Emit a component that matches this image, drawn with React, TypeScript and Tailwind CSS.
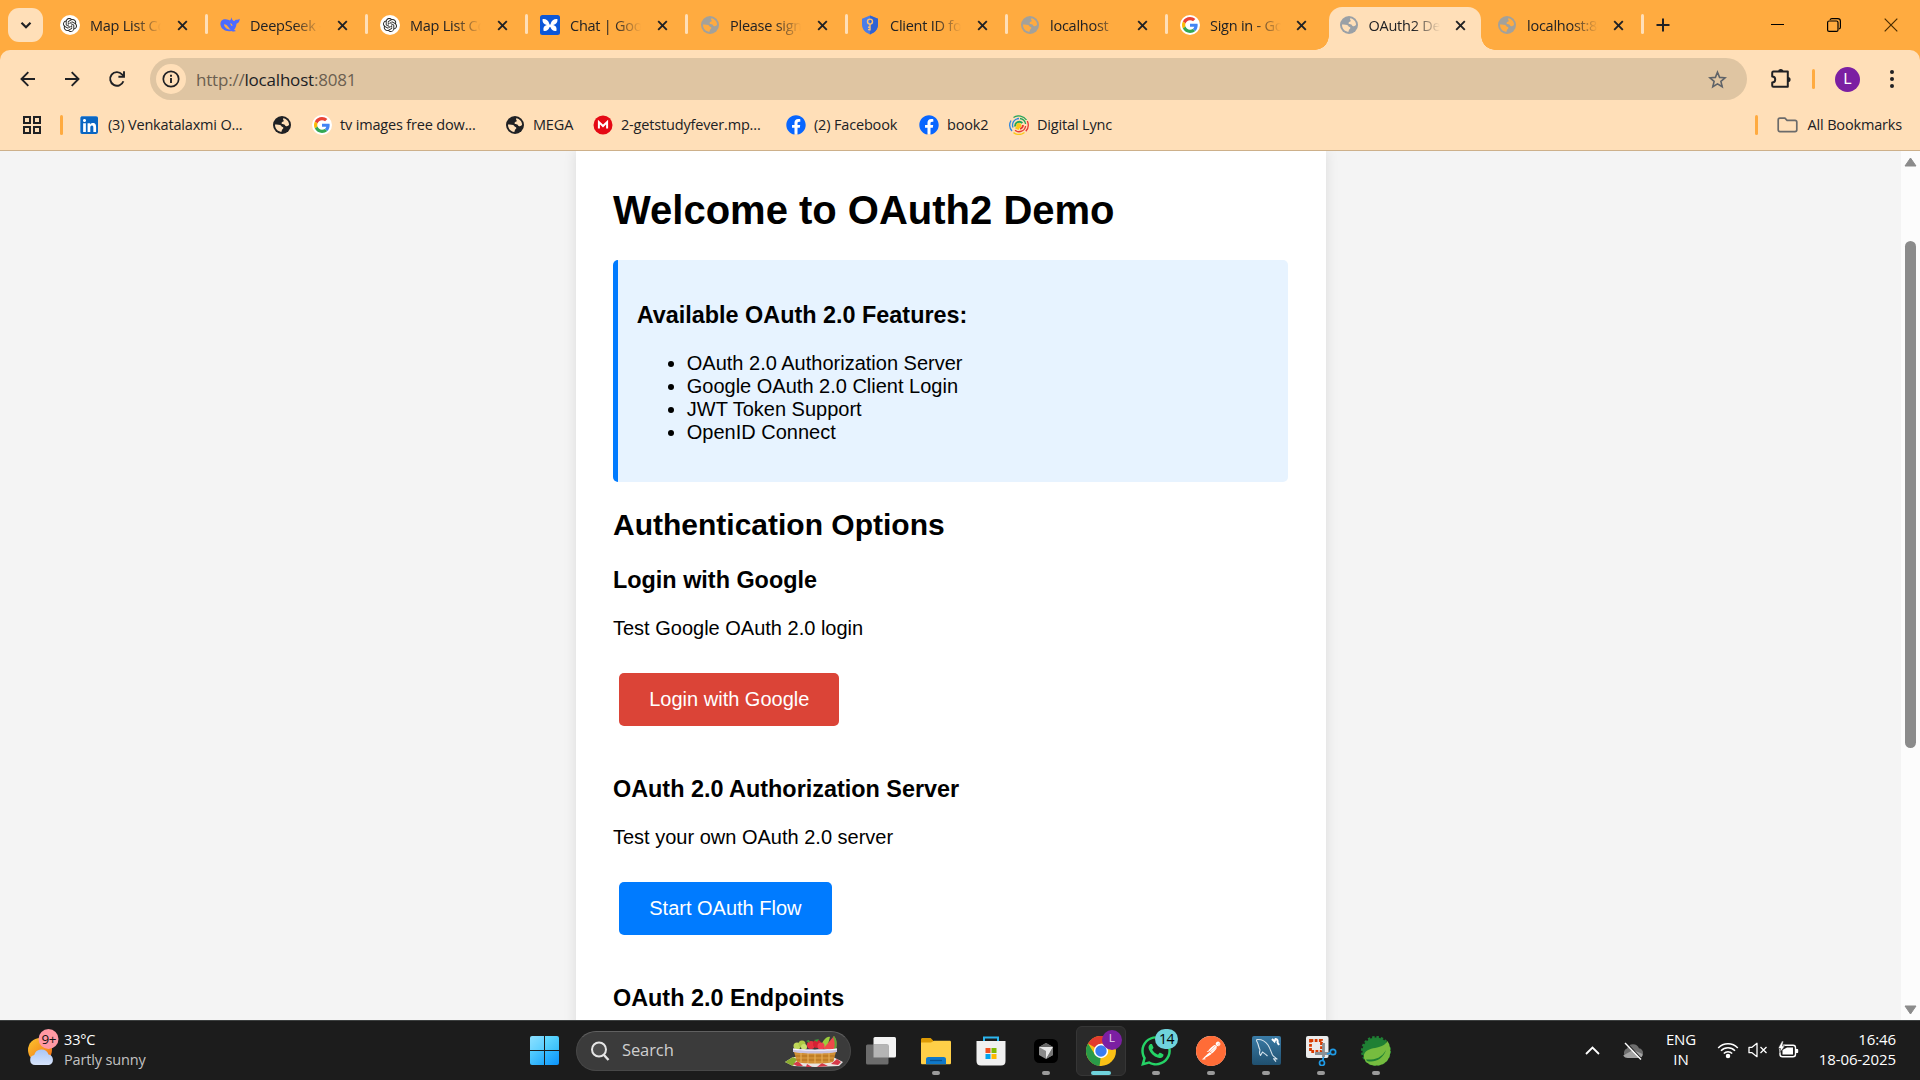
import React from "react";
import { SiOpenai, SiPostman } from "react-icons/si";
import { FaFacebook, FaLinkedin, FaWhatsapp } from "react-icons/fa";

type P = { children?: React.ReactNode; className?: string };

/* ---------- site icons ---------- */

function GoogleG({ size = 16 }: { size?: number }) {
  return (
    <span className="flex size-5 shrink-0 items-center justify-center rounded-full bg-white">
      <svg width={size} height={size} viewBox="0 0 48 48">
        <path fill="#EA4335" d="M24 9.5c3.54 0 6.71 1.22 9.21 3.6l6.85-6.85C35.9 2.38 30.47 0 24 0 14.62 0 6.51 5.38 2.56 13.22l7.98 6.19C12.43 13.72 17.74 9.5 24 9.5z" />
        <path fill="#4285F4" d="M46.98 24.55c0-1.57-.15-3.09-.38-4.55H24v9.02h12.94c-.58 2.96-2.26 5.48-4.78 7.18l7.73 6c4.51-4.18 7.09-10.36 7.09-17.65z" />
        <path fill="#FBBC05" d="M10.53 28.59c-.48-1.45-.76-2.99-.76-4.59s.27-3.14.76-4.59l-7.98-6.19C.92 16.46 0 20.12 0 24c0 3.88.92 7.54 2.56 10.78l7.97-6.19z" />
        <path fill="#34A853" d="M24 48c6.48 0 11.93-2.13 15.89-5.81l-7.73-6c-2.15 1.45-4.92 2.3-8.16 2.3-6.26 0-11.57-4.22-13.47-9.91l-7.98 6.19C6.51 42.62 14.62 48 24 48z" />
      </svg>
    </span>
  );
}

function Globe({ color, land }: { color: string; land: string }) {
  return (
    <svg className="size-5 shrink-0" viewBox="0 0 20 20">
      <circle cx="10" cy="10" r="9" fill={color} />
      <path fill={land} d="M11.3 3.2c3.3.5 5.600 3.200 5.800 6.300-.7 1.600-2 2-3.400 1.500-.7-.3-.7-1.300-1.500-1.600-1-.4-2.300 0-2.600-.9-.3-1 .8-1.600 1.700-1.900.9-.4.3-1.200-.1-1.800-.3-.6-.3-1.200.1-1.600z" />
      <path fill={land} d="M3 9.600c1.500-.2 3.700-.1 5.100.5 1.300.6 1.200 1.700 2.500 2 .9.300 1 1.300.2 1.900-1.100.7-.8 1.900-1.500 2.900C5.600 16.600 2.900 13.500 3 9.600z" />
    </svg>
  );
}
const GreyGlobe = () => <Globe color="#a3a19b" land="#ffab40" />;
const BlackGlobe = () => <Globe color="#202124" land="#ffdfb8" />;

const OpenAi = () => (
  <span className="flex size-5 shrink-0 items-center justify-center rounded-full bg-white">
    <SiOpenai className="size-[14px] text-[#222]" />
  </span>
);

const Whale = () => (
  <svg className="size-5 shrink-0" viewBox="0 0 20 20">
    <path fill="#4d6bfe" d="M11.500 2.300c.2 1.900 1 3.300 2.700 4 .4-1 1.400-1.600 2.600-1.500 1.100.1 1.800-.3 2.900-1-.1 2.500-1 4.300-3.200 4.900-.2 2.500-1 4.400-2.400 6 .6.700 1.300 1 2 1.400-2 .6-3.500.3-4.700-.2C6.800 17.200.8 14.600.4 9.300.3 6 2.600 4 5.800 4.300c1.600.1 3 .5 4 1.300.9-.7 1.300-1.800 1.700-3.300z" />
    <path fill="#ffab40" d="M4 9.300c1.800-.1 3.300 1.100 4.400 2.800.7 1.100 1.300 1.900 2.400 2.500-3 .2-6.600-1.900-6.800-5.300zM10 8.300c1.500.1 2.500 1.200 2.500 2.800-1.100-.2-1.700-.8-1.900-1.800z" />
  </svg>
);

const Butterfly = () => (
  <svg className="size-5 shrink-0" viewBox="0 0 20 20">
    <rect width="20" height="20" rx="2.500" fill="#0b57d9" />
    <path fill="#fff" d="M2.500 4.200c2.800-.7 6 1 6.900 4.900.1.700 1.100.7 1.200 0C11.500 5.200 14.700 3.500 17.500 4.200c.3 3-1.200 5.200-4.300 5.900 2.600.6 3.800 2.500 3.300 5.600-2.600.7-4.900-.4-5.900-3.200-.2-.6-1-.6-1.200 0-1 2.800-3.300 3.900-5.900 3.200-.5-3.100.7-5 3.300-5.600-3.100-.7-4.600-2.900-4.300-5.900z" />
  </svg>
);

const Shield = () => (
  <svg className="size-5 shrink-0" viewBox="0 0 20 20">
    <path fill="#4a7de8" d="M10 .6l8 3.200v6c0 4.300-3 7.800-8 9.600-5-1.800-8-5.300-8-9.600v-6z" />
    <path fill="#2f62d3" d="M10 .6l8 3.200v6c0 4.300-3 7.800-8 9.600z" />
    <circle cx="10" cy="6.600" r="2.500" fill="none" stroke="#ffc06b" strokeWidth="1.400" />
    <path d="M10 9v6.500M10 12.200H8M10 14.600H8" stroke="#ffc06b" strokeWidth="1.400" fill="none" />
  </svg>
);

const Mega = () => (
  <svg className="size-5 shrink-0" viewBox="0 0 20 20">
    <circle cx="10" cy="10" r="9.500" fill="#e50914" />
    <path d="M5.900 13.600V7l4.100 4 4.100-4v6.600" fill="none" stroke="#fff" strokeWidth="2" />
  </svg>
);

const Lync = () => (
  <svg className="size-5 shrink-0" viewBox="0 0 20 20" fill="none" strokeWidth="1.300">
    <path stroke="#22a45a" d="M4.500 2.500a9.300 9.300 0 0 1 13 2.500" />
    <path stroke="#e53935" d="M18.300 6a9.300 9.300 0 0 1-1.500 10.200" />
    <path stroke="#f9c81c" d="M15.500 17.400a9.300 9.300 0 0 1-11 .2" />
    <path stroke="#2e86de" d="M3 16A9.300 9.300 0 0 1 2 5.500" />
    <path stroke="#2e86de" d="M4 12.500a6.600 6.600 0 0 1 6-9" />
    <path stroke="#22a45a" d="M11 3.500a6.600 6.600 0 0 1 5.600 5.500" />
    <path stroke="#e53935" d="M16.600 11A6.600 6.600 0 0 1 6 15.300" />
    <path stroke="#22a45a" strokeWidth="2" d="M6.300 11.500a4 4 0 0 1 7-3.300" />
    <path stroke="#e53935" strokeWidth="1.800" d="M14 10a4 4 0 0 1-3 3.800" />
    <circle cx="9.800" cy="10.500" r="2.600" fill="#f9c81c" />
    <path stroke="#f9c81c" strokeWidth="2" d="M6.500 12.500l3.500 1.500" />
  </svg>
);

const FacebookIcon = () => (
  <span className="flex size-5 shrink-0 items-center justify-center rounded-full bg-[radial-gradient(circle,#fff_60%,transparent_62%)]">
    <FaFacebook className="size-5 text-[#0866ff]" />
  </span>
);

/* ---------- tab strip ---------- */

const CloseX = ({ className = "" }: P) => (
  <svg className={"size-[11px] shrink-0 " + className} viewBox="0 0 11 11">
    <path d="M1.200 1.200l8.600 8.600M9.800 1.200L1.200 9.800" stroke="#202124" strokeWidth="1.900" />
  </svg>
);

type TabProps = { icon: React.ReactNode; label: string; width: string; close?: string; active?: boolean; sep?: boolean };

function Tab({ icon, label, width, close = "ml-[16px]", active, sep }: TabProps) {
  return (
    <div className={"relative flex h-[50px] shrink-0 items-center pl-[14px] " + width}>
      {active && (
        <>
          <div className="absolute top-[7px] left-[4.500px] h-[43px] w-[152px] rounded-t-[13px] bg-[#ffdfb8]" />
          <div className="absolute bottom-0 left-[-9.500px] size-[14px] bg-[radial-gradient(circle_at_0_0,transparent_13.500px,#ffdfb8_14px)]" />
          <div className="absolute bottom-0 left-[156.500px] size-[14px] bg-[radial-gradient(circle_at_100%_0,transparent_13.500px,#ffdfb8_14px)]" />
        </>
      )}
      <span className="relative flex">{icon}</span>
      <span className="relative mt-px ml-[10px] w-[71px] shrink-0 overflow-hidden text-[14.500px] tracking-[-0.250px] whitespace-nowrap [mask-image:linear-gradient(to_right,#000_62%,transparent_100%)]">
        {label}
      </span>
      <CloseX className={"relative " + close} />
      {sep && <div className="absolute top-[14px] right-[-2px] h-5 w-[3px] rounded-sm bg-[#ffdfb8]" />}
    </div>
  );
}

function TabStrip() {
  return (
    <div className="flex h-[50px] items-center bg-[#ffab40] text-[#202124]">
      <div className="ml-2 flex h-[34px] w-[35px] items-center justify-center rounded-[11px] bg-[#ffdfb8]">
        <svg className="size-[12px]" viewBox="0 0 12 12">
          <path d="M1.500 3.800L6 8.200l4.500-4.400" fill="none" stroke="#202124" strokeWidth="2.200" />
        </svg>
      </div>
      <div className="ml-[3px] flex">
        <Tab width="w-[160px]" sep icon={<OpenAi />} label="Map List Conversion" />
        <Tab width="w-[160px]" sep icon={<Whale />} label="DeepSeek - Into" />
        <Tab width="w-[160px]" sep icon={<OpenAi />} label="Map List Conversion" />
        <Tab width="w-[160px]" sep icon={<Butterfly />} label="Chat | Google" />
        <Tab width="w-[160px]" sep icon={<GreyGlobe />} label="Please sign in" />
        <Tab width="w-[160px]" sep icon={<Shield />} label="Client ID for Web" />
        <Tab width="w-[160px]" sep icon={<GreyGlobe />} label="localhost" />
        <Tab width="w-[158.500px]" close="ml-[14.500px]" icon={<GoogleG />} label="Sign in - Google" />
        <Tab width="w-[158.500px]" close="ml-[15px]" active icon={<Globe color="#9aa0a6" land="#ffdfb8" />} label="OAuth2 Demo" />
        <Tab width="w-[159px]" close="ml-[15px]" sep icon={<GreyGlobe />} label="localhost:8081" />
      </div>
      <svg className="ml-[14px] size-[14px]" viewBox="0 0 14 14">
        <path d="M7 .5v13M.5 7h13" stroke="#202124" strokeWidth="2" />
      </svg>
      <div className="mr-[22px] ml-auto flex items-center gap-[43px] text-black">
        <div className="mb-[2px] h-px w-[13px] bg-black" />
        <svg className="size-[14px]" viewBox="0 0 14 14" fill="none" stroke="currentColor" strokeWidth="1.200">
          <rect x=".6" y="3" width="10.400" height="10.400" rx="1.500" />
          <path d="M3 1.900c.3-.8 1-1.300 1.800-1.300h6c1.500 0 2.600 1.100 2.600 2.600v6c0 .9-.5 1.500-1.300 1.800" />
        </svg>
        <svg className="size-[14px]" viewBox="0 0 14 14">
          <path d="M.7.7l12.600 12.600M13.300.7L.7 13.300" stroke="#4a2d00" strokeWidth="1.200" />
        </svg>
      </div>
    </div>
  );
}

/* ---------- toolbar ---------- */

function Toolbar() {
  return (
    <div className="flex h-[58px] items-center text-[#202124]">
      <svg className="ml-5 size-4" viewBox="0 0 16 16" fill="none" stroke="currentColor" strokeWidth="1.900">
        <path d="M15 8H1.800M8.300 1.200L1.500 8l6.800 6.800" />
      </svg>
      <svg className="ml-[28px] size-4" viewBox="0 0 16 16" fill="none" stroke="currentColor" strokeWidth="1.900">
        <path d="M1 8h13.200M7.700 1.200L14.500 8l-6.800 6.800" />
      </svg>
      <svg className="ml-[28px] size-[18px]" viewBox="0 0 18 18" fill="none" stroke="currentColor" strokeWidth="1.900">
        <path d="M15.400 11.200A6.800 6.800 0 1 1 14 4.300l2 2" />
        <path d="M16 1.200v5.600h-5.600" />
      </svg>
      <div className="ml-[24px] flex h-[42px] w-[1597px] items-center rounded-full bg-[#dfc5a2] pr-[20px] pl-[6px]">
        <div className="flex size-[30px] items-center justify-center rounded-full bg-[#ffdfb8]">
          <svg className="size-[18px]" viewBox="0 0 18 18">
            <circle cx="9" cy="9" r="7.700" fill="none" stroke="currentColor" strokeWidth="1.700" />
            <path d="M9 8v5M9 4.800v1.900" stroke="currentColor" strokeWidth="1.900" />
          </svg>
        </div>
        <div className="mt-px ml-[10px] text-[17px] tracking-[-0.200px] text-[#6b5f50]">
          http://<span className="text-[#202124]">localhost</span>:8081
        </div>
        <svg className="ml-auto size-[19px]" viewBox="0 0 19 19" fill="none" stroke="#5f6368" strokeWidth="1.600">
          <path d="M9.500 2.200l2.100 5.200 5.500.4-4.200 3.600 1.300 5.400-4.700-2.900-4.700 2.900 1.300-5.400L1.900 7.800l5.500-.4z" />
        </svg>
      </div>
      <svg className="ml-[23px] size-[22px]" viewBox="0 0 22 22">
        <path d="M3.400 3.600h14.400v15.200H3.400c-.8 0-1.200-.4-1.200-1.200v-3c2 0 3-1.300 3-3.100s-1-3.100-3-3.100v-3c0-1.200.4-1.800 1.200-1.800z" fill="none" stroke="currentColor" strokeWidth="2" strokeLinejoin="round" />
        <path d="M8.200 3.500a2.600 2.600 0 0 1 5.200 0zM18 8.900a2.600 2.600 0 0 1 0 5.200z" fill="currentColor" />
      </svg>
      <div className="ml-[20px] h-5 w-[3px] rounded-sm bg-[#ffab40]" />
      <div className="ml-[20px] flex size-[25px] items-center justify-center rounded-full bg-[#7b1fa2] font-['Roboto',sans-serif] text-[15px] text-white">L</div>
      <div className="ml-[30px] flex flex-col gap-[3px]">
        <div className="size-1 rounded-full bg-current" />
        <div className="size-1 rounded-full bg-current" />
        <div className="size-1 rounded-full bg-current" />
      </div>
    </div>
  );
}

/* ---------- bookmarks ---------- */

function Bookmark({ icon, label, width }: { icon: React.ReactNode; label?: string; width: string }) {
  return (
    <div className={"flex shrink-0 items-center gap-2 whitespace-nowrap " + width}>
      {icon}
      {label && <span>{label}</span>}
    </div>
  );
}

function BookmarksBar() {
  return (
    <div className="flex h-[34px] items-center text-[14.500px] tracking-[-0.170px] text-[#202124]">
      <div className="ml-[23px] grid grid-cols-2 gap-[2px]">
        <div className="size-2 border-2 border-current" />
        <div className="size-2 border-2 border-current" />
        <div className="size-2 border-2 border-current" />
        <div className="size-2 border-2 border-current" />
      </div>
      <div className="mr-[17px] ml-[19px] h-5 w-[3px] rounded-sm bg-[#ffab40]" />
      <Bookmark
        width="w-[192px]"
        label="(3) Venkatalaxmi O..."
        icon={
          <span className="mr-[2px] flex size-[18px] shrink-0 items-center justify-center overflow-hidden rounded-[2px] bg-white">
            <FaLinkedin className="size-[21px] shrink-0 text-[#0a66c2]" />
          </span>
        }
      />
      <Bookmark width="w-[40px]" icon={<BlackGlobe />} />
      <Bookmark width="w-[193px]" icon={<GoogleG />} label="tv images free dow..." />
      <Bookmark width="w-[88px]" icon={<BlackGlobe />} label="MEGA" />
      <Bookmark width="w-[193px]" icon={<Mega />} label="2-getstudyfever.mp..." />
      <Bookmark width="w-[133px]" icon={<FacebookIcon />} label="(2) Facebook" />
      <Bookmark width="w-[90px]" icon={<FacebookIcon />} label="book2" />
      <Bookmark width="w-[110px]" icon={<Lync />} label="Digital Lync" />
      <div className="mr-[19px] ml-auto h-5 w-[3px] rounded-sm bg-[#ffab40]" />
      <svg className="mr-[10px] h-[16px] w-[21px]" viewBox="0 0 21 16">
        <path d="M1.200 3c0-1.200.7-1.900 1.700-1.900h5l2.200 2.300h7.900c1.200 0 1.800.6 1.800 1.700v7.700c0 1.200-.6 1.900-1.800 1.900H2.900c-1 0-1.700-.7-1.700-1.900z" fill="none" stroke="#6b6b6b" strokeWidth="1.700" />
      </svg>
      <span className="mr-[18px]">All Bookmarks</span>
    </div>
  );
}

/* ---------- web page ---------- */

const H3 = ({ children, className = "" }: P) => (
  <h3 className={"text-[23.400px] leading-[27px] font-bold " + className}>{children}</h3>
);

const Action = ({ children, className = "" }: P) => (
  <button className={"mx-[6.250px] mt-[33.500px] block rounded-[5px] px-[30px] py-[15px] text-[20px] leading-[23px] text-white " + className}>
    {children}
  </button>
);

function DemoPage() {
  return (
    <div className="flex min-h-0 flex-1 bg-[#f4f4f4] font-['Liberation_Sans',Arial,sans-serif] text-[20px] leading-[23px] text-black">
      <div className="flex flex-1 justify-center overflow-hidden">
        <main className="h-[1100px] w-[750px] bg-white px-[37.500px] pt-[35.500px] shadow-[0_0_12.500px_rgba(0,0,0,0.1)]">
          <h1 className="text-[40px] leading-[46px] font-bold">Welcome to OAuth2 Demo</h1>
          <section className="mt-[27.500px] rounded-[5px] border-l-[5px] border-[#007bff] bg-[#e7f3ff] px-[18.750px] pt-[42.150px] pb-[38.750px]">
            <H3>Available OAuth 2.0 Features:</H3>
            <ul className="mt-[22.600px] list-disc pl-[50px]">
              <li>OAuth 2.0 Authorization Server</li>
              <li>Google OAuth 2.0 Client Login</li>
              <li>JWT Token Support</li>
              <li>OpenID Connect</li>
            </ul>
          </section>
          <h2 className="mt-[26px] text-[30px] leading-[34px] font-bold">Authentication Options</h2>
          <H3 className="mt-[24.900px]">Login with Google</H3>
          <p className="mt-[22.400px]">Test Google OAuth 2.0 login</p>
          <Action className="bg-[#db4437]">Login with Google</Action>
          <H3 className="mt-[50px]">OAuth 2.0 Authorization Server</H3>
          <p className="mt-[22.400px]">Test your own OAuth 2.0 server</p>
          <Action className="bg-[#007bff]">Start OAuth Flow</Action>
          <H3 className="mt-[50px]">OAuth 2.0 Endpoints</H3>
        </main>
      </div>
      <div className="flex w-[19px] flex-col items-center bg-[#fcfcfc] pt-[6px] pb-[5px]">
        <svg className="h-[10px] w-[13px]" viewBox="0 0 13 10">
          <path d="M6.500 1L12 9H1z" fill="#8b8b8b" stroke="#8b8b8b" strokeLinejoin="round" />
        </svg>
        <div className="mt-[74px] h-[507px] w-[11px] rounded-full bg-[#8b8b8b]" />
        <svg className="mt-auto h-[10px] w-[13px]" viewBox="0 0 13 10">
          <path d="M6.500 9L12 1H1z" fill="#8b8b8b" stroke="#8b8b8b" strokeLinejoin="round" />
        </svg>
      </div>
    </div>
  );
}

/* ---------- taskbar ---------- */

function TaskbarApp({ children, running, active }: P & { running?: boolean; active?: boolean }) {
  return (
    <div className="flex w-[55px] shrink-0 justify-center">
      <div className={"relative flex h-[50px] w-[50px] items-center justify-center rounded-[6px] " + (active ? "border border-[#363636] bg-[#2a2a2a]" : "")}>
        {children}
        {running && <div className="absolute bottom-[1px] h-1 w-2 rounded-full bg-[#9a9a9a]" />}
        {active && <div className="absolute bottom-0 h-1 w-5 rounded-full bg-[#6fd3dc]" />}
      </div>
    </div>
  );
}

const Basket = () => (
  <svg className="h-[32px] w-[58px]" viewBox="0 0 58 32">
    <path d="M0 26l8-5h40l10 5-4 4-24 1-22-1z" fill="#e8e4e2" />
    <path d="M0 26l8-5 4 2-4 7z" fill="#8aab2e" />
    <path d="M8 28l5-3 5 5h-6zM22 28l5 3h-6zM32 31l5-4 6 3zM46 28l6-5 4 3-3 3z" fill="#d6394a" />
    <path d="M36 12C37 4 42 0 45 1l-3 11z" fill="#9ccc3c" />
    <path d="M38 13L49 0c3 4 3 9 2 13z" fill="#ef4a4a" />
    <path d="M49 0c3.500 4 3 9 2 13h-2c1-4 1-8-1-12z" fill="#5da637" />
    <circle cx="12" cy="10" r="3.500" fill="#bfd75a" />
    <circle cx="17" cy="8" r="3.500" fill="#aecb45" />
    <circle cx="19" cy="11" r="3" fill="#cbe070" />
    <circle cx="26" cy="9" r="4" fill="#e5323f" />
    <circle cx="32" cy="8" r="4" fill="#d42133" />
    <circle cx="36" cy="10" r="3.500" fill="#f04050" />
    <path d="M21 5l4 2-1-3zM29 4l3 2 2-3z" fill="#3f9b3a" />
    <path d="M9 16h42l-3 10c-8 2-28 2-36 0z" fill="#d08f35" />
    <path d="M10 20h40M11 24h38" stroke="#b06f1d" strokeWidth="1.200" />
    <path d="M16 17v9M23 17v10M30 17v10M37 17v10M44 17v9" stroke="#e5ad55" strokeWidth="1.200" />
    <path d="M8 12.500c10 1.500 34 1.500 44 0v3.500c-10 2-34 2-44 0z" fill="#c9c3e0" />
    <path d="M8 12.500c10 1.500 34 1.500 44 0v1.200c-10 1.500-34 1.500-44 0z" fill="#f7f5ff" />
  </svg>
);

function Taskbar() {
  return (
    <div className="flex h-[60px] shrink-0 items-center border-t border-[#3c3f3f] bg-[#1c1c1c] text-white">
      <div className="flex w-[530px] items-center pb-[2px] pl-[27px]">
        <svg className="mb-[6px] h-[40px] w-[32px]" viewBox="0 0 32 40">
          <defs>
            <linearGradient id="sun" x1="0" y1="0" x2="1" y2="1">
              <stop offset="0" stopColor="#fcc62e" />
              <stop offset="1" stopColor="#f26a14" />
            </linearGradient>
            <linearGradient id="cloud" x1="0" y1="0" x2="0" y2="1">
              <stop offset="0" stopColor="#a9c6f7" />
              <stop offset="1" stopColor="#d7e4fb" />
            </linearGradient>
          </defs>
          <circle cx="13" cy="23" r="12" fill="url(#sun)" />
          <path d="M8 38a5 5 0 0 1-.8-9.900A7.500 7.500 0 0 1 21.500 27.500 5.400 5.400 0 0 1 22 38z" fill="url(#cloud)" />
          <circle cx="21.500" cy="12" r="10" fill="#ff99a4" />
          <text x="21.800" y="16.900" fontSize="13.500" textAnchor="middle" fill="#111" fontFamily="Open Sans" letterSpacing="-0.500">9+</text>
        </svg>
        <div className="ml-[5px] text-[14.500px] leading-[20px] tracking-[-0.160px]">
          <div>33°C</div>
          <div className="text-[#c2c2c2]">Partly sunny</div>
        </div>
      </div>
      <div className="grid h-[29px] w-[29px] grid-cols-2 gap-px">
        <div className="rounded-tl-[2px] bg-gradient-to-br from-[#8be0ff] to-[#55cdff]" />
        <div className="rounded-tr-[2px] bg-gradient-to-br from-[#66dcff] to-[#35bdf9]" />
        <div className="rounded-bl-[2px] bg-gradient-to-br from-[#56cfff] to-[#1ea8fa]" />
        <div className="rounded-br-[2px] bg-gradient-to-br from-[#35bdff] to-[#0a93fa]" />
      </div>
      <div className="ml-[17px] flex h-10 w-[275px] items-center rounded-full border border-[#484848] border-t-[#606060] bg-[#3b3b3b] pr-[7px] pl-[13px]">
        <svg className="size-5" viewBox="0 0 20 20" fill="none" stroke="#e6e6e6" strokeWidth="2">
          <circle cx="9" cy="8.500" r="7" fill="#4d4d4d" />
          <path d="M13.500 13.500l5 5.500" strokeWidth="2.400" />
        </svg>
        <span className="ml-[12px] text-[16.500px] tracking-[-0.100px] text-[#cfcfcf]">Search</span>
        <div className="mt-[3px] ml-auto">
          <Basket />
        </div>
      </div>
      <div className="ml-[2.500px] flex">
        <TaskbarApp>
          <svg className="h-[28px] w-[30px]" viewBox="0 0 30 28">
            <rect x="7.500" y="0" width="22.500" height="20.500" rx="1.500" fill="#f3f3f3" />
            <rect x="0" y="7.500" width="22.500" height="20" rx="1.500" fill="#6c6c6c" />
            <path d="M7.500 7.500h15v13h-15z" fill="#b5b5b5" />
          </svg>
        </TaskbarApp>
        <TaskbarApp running>
          <svg className="h-[28px] w-[30px]" viewBox="0 0 30 28">
            <path d="M0 2.500C0 1.500.7 1 1.600 1h8l3 3H28c1.200 0 2 .6 2 1.600V10H0z" fill="#dd9a05" />
            <path d="M0 5.500h10l3-1.800h15.500c1 0 1.500.6 1.500 1.500V26c0 .8-.6 1.300-1.400 1.300H1.400C.6 27.300 0 26.800 0 26z" fill="#ffcf48" />
            <path d="M5 27.300v-5c0-1.500 1-2.300 2.400-2.300h15.200c1.400 0 2.400.8 2.400 2.300v5z" fill="#0f78c9" />
            <path d="M9 23.500h12" stroke="#08508f" strokeWidth="1.300" />
          </svg>
        </TaskbarApp>
        <TaskbarApp>
          <svg className="h-[30px] w-[30px]" viewBox="0 0 30 30">
            <path d="M8 5V1.500h14V5" fill="none" stroke="#2cb5ee" strokeWidth="2" />
            <path d="M.5 5h29v20c0 3-1.500 4.500-4.500 4.500H5C2 29.500.5 28 .5 25z" fill="#f0f0f0" />
            <path fill="#f25022" d="M9.500 12h5v5h-5z" />
            <path fill="#7fba00" d="M15.500 12h5v5h-5z" />
            <path fill="#00a4ef" d="M9.500 18h5v5h-5z" />
            <path fill="#ffb900" d="M15.500 18h5v5h-5z" />
          </svg>
        </TaskbarApp>
        <TaskbarApp running>
          <svg className="size-[24px]" viewBox="0 0 24 24">
            <rect width="24" height="24" rx="5.500" fill="#000" />
            <path d="M12 4l7 4v8l-7 4-7-4V8z" fill="#8a8a8a" />
            <path d="M12 4l7 4H5z" fill="#666" />
            <path d="M5 8h14l-7 12v-8z" fill="#e6e6e6" />
            <path d="M19 8v8l-7 4z" fill="#777" />
          </svg>
        </TaskbarApp>
        <TaskbarApp active>
          <svg className="size-[30px]" viewBox="0 0 30 30">
            <circle cx="15" cy="15" r="15" fill="#fbc116" />
            <path d="M15 15L2 7.500A15 15 0 0 1 28 7.500H15z" fill="#e33b2e" />
            <path d="M2 7.500L8.900 18.500 15 22l-1 8A15 15 0 0 1 2 7.500z" fill="#2a9a48" />
            <path d="M21.100 18.500L15 30a15 15 0 0 1-1.500-.1L15 20z" fill="#fbc116" />
            <circle cx="15" cy="15" r="7.200" fill="#fff" />
            <circle cx="15" cy="15" r="5.700" fill="#3a7cf0" />
          </svg>
          <div className="absolute top-[3px] left-[25px] flex size-5 items-center justify-center rounded-full bg-[#7b1fa2] font-['Roboto',sans-serif] text-[11px] text-[#e6d2ee]">L</div>
        </TaskbarApp>
        <TaskbarApp running>
          <FaWhatsapp className="size-[34px] text-[#25d366]" />
          <div className="absolute top-[3px] left-[24px] flex h-[20px] w-[23px] items-center justify-center rounded-full bg-[#6fd3dc] text-[14px] tracking-[-0.500px] text-black">14</div>
        </TaskbarApp>
        <TaskbarApp running>
          <span className="flex size-[30px] items-center justify-center rounded-full bg-white">
            <SiPostman className="size-[30px] text-[#ff6c37]" />
          </span>
        </TaskbarApp>
        <TaskbarApp running>
          <svg className="size-[29px]" viewBox="0 0 29 29">
            <defs>
              <linearGradient id="sql" x1="0" y1="0" x2="0" y2="1">
                <stop offset="0" stopColor="#3a7ba6" />
                <stop offset="1" stopColor="#20506f" />
              </linearGradient>
            </defs>
            <rect width="29" height="29" rx="2" fill="url(#sql)" />
            <g fill="none" stroke="#d5e3ec" strokeWidth="1.100" strokeLinejoin="round">
              <path d="M5 3.500c4-.4 8.500 2 11 5.500 2 3 3 7 4.500 10 1 1.600 3 2.500 4.500 4l-3.500-.3 2.500 3M5 3.500c-1.500 1 .5 2.500 1 4.500s1 4 2 6c-.7 2-.5 4 .5 5.500l2-3.500c2 1.500 3.500 2.500 5 4" />
            </g>
            <path d="M20 3l2.500 2.500 1-2.500c2 .3 2.500 2 2 3.500L27 9" fill="none" stroke="#fff" strokeWidth="2" />
          </svg>
        </TaskbarApp>
        <TaskbarApp running>
          <svg className="h-[30px] w-[31px]" viewBox="0 0 31 30">
            <rect x="0" y="0" width="22.500" height="22" rx="2" fill="#ececec" />
            <rect x="4.500" y="4.500" width="11" height="11" fill="none" stroke="#d83b01" strokeWidth="2.800" strokeDasharray="2.800 1.400" />
            <path d="M17.500 7v14M9 17.500h15" stroke="#8b9196" strokeWidth="2.800" />
            <circle cx="27" cy="16" r="2.700" fill="none" stroke="#1f9ae5" strokeWidth="1.700" />
            <circle cx="16" cy="27" r="2.500" fill="none" stroke="#1f9ae5" strokeWidth="1.700" />
            <path d="M21 18l3.500-1M17.500 21l-.7 3.500" stroke="#1f9ae5" strokeWidth="1.800" />
          </svg>
        </TaskbarApp>
        <TaskbarApp running>
          <svg className="size-[30px]" viewBox="0 0 30 30">
            <circle cx="15" cy="15" r="13.500" fill="#1f8034" />
            <circle cx="15" cy="15" r="14" fill="none" stroke="#1f8034" strokeWidth="2" strokeDasharray="2.500 1.900" />
            <path d="M26.500 5c3.500 6 4 13 .5 18.500C22.500 30 14 31 8 28c-5-2.500-6.500-8-4-11.500 3-4 9-4 14-5.500 4-1.200 7-3 8.500-6z" fill="#76bc3f" />
            <path d="M5 23.500c8 .5 15.500-1 20-9.500-3 9.500-12 13-19 11z" fill="#1f8034" />
          </svg>
        </TaskbarApp>
      </div>
      <div className="mr-[24px] mb-[3px] ml-auto flex items-center text-[15px] leading-[20px]">
        <svg className="mt-[3px] h-[9px] w-[15px]" viewBox="0 0 15 9">
          <path d="M1 8l6.500-6.500L14 8" fill="none" stroke="#fff" strokeWidth="1.800" />
        </svg>
        <svg className="mt-[3px] ml-[22px] h-[18px] w-[22px]" viewBox="0 0 22 18">
          <path d="M6 16a5 5 0 0 1-1-9.500A6.500 6.500 0 0 1 17 6.200 5 5 0 0 1 17 16z" fill="#6e6e6e" />
          <path d="M6 16c-2 0-4-.8-4.800-2.500L11 8l9.500 4c.3 2-1 4-3.500 4z" fill="#a3a3a3" />
          <path d="M4.500 1l15.500 16.500" stroke="#1c1c1c" strokeWidth="1.500" />
          <path d="M3 1l16 16.500" stroke="#fff" strokeWidth="1.400" />
        </svg>
        <div className="ml-[20px] w-[34px] text-center text-[15px] tracking-[-0.100px]">
          ENG
          <br />
          IN
        </div>
        <svg className="mt-[2px] ml-[19px] h-[18px] w-[22px]" viewBox="0 0 22 18" fill="none" stroke="#fff" strokeWidth="1.500">
          <path d="M1.200 7a13.500 13.500 0 0 1 19.600 0M4 9.800a9.800 9.800 0 0 1 14 0M6.800 12.500a6 6 0 0 1 8.400 0" />
          <circle cx="11" cy="15" r="1.500" fill="#fff" />
        </svg>
        <svg className="mt-[2px] ml-[9px] h-[18px] w-[20px]" viewBox="0 0 20 18" fill="none" stroke="#fff" strokeWidth="1.300">
          <path d="M1 6.300h3L9 2.300v13.400l-5-4H1z" strokeLinejoin="round" />
          <path d="M12.500 6l6 6M18.500 6l-6 6" />
        </svg>
        <svg className="mt-[2px] ml-[10px] h-[18px] w-[21px]" viewBox="0 0 21 18">
          <rect x="2" y="4.200" width="15.500" height="11.500" rx="2.500" fill="none" stroke="#fff" strokeWidth="1.400" />
          <path d="M4.500 13.500V9L9 6.500h6v7z" fill="#fff" />
          <path d="M18 8h1.200c.6 0 1 .4 1 1v2c0 .6-.4 1-1 1H18z" fill="#fff" />
          <path d="M4 0L0 7.500h2.500L2 11.500 7 5H4.500L5.500 0z" fill="#fff" stroke="#1c1c1c" strokeWidth=".6" />
        </svg>
        <div className="ml-[19px] w-[78px] text-right tracking-[-0.100px] whitespace-nowrap">
          16:46
          <br />
          18-06-2025
        </div>
      </div>
    </div>
  );
}

export default function App() {
  return (
    <div className="flex h-[1080px] w-[1920px] flex-col overflow-hidden font-['Open_Sans','Noto_Sans',sans-serif]">
      <div className="shrink-0 bg-[#ffab40]">
        <TabStrip />
        <div className="h-[101px] rounded-t-[10px] border-b border-[#cdb08a] bg-[#ffdfb8]">
          <Toolbar />
          <BookmarksBar />
        </div>
      </div>
      <DemoPage />
      <Taskbar />
    </div>
  );
}
